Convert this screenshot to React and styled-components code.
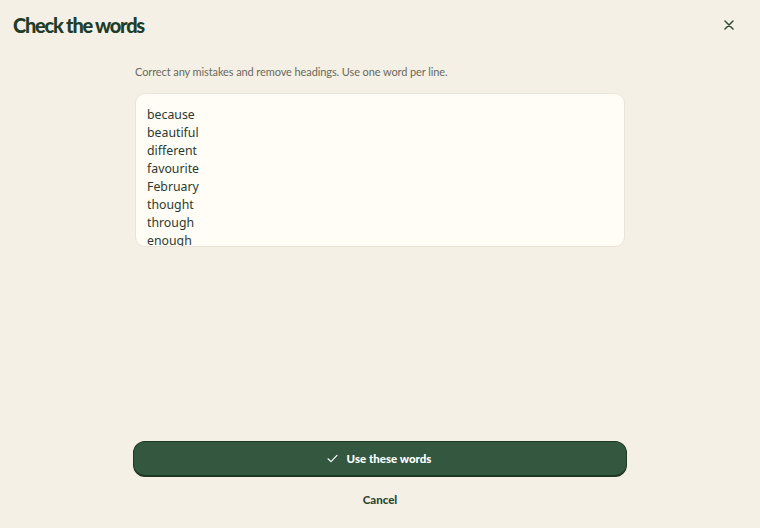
import React from "react";
import styled, { createGlobalStyle } from "styled-components";

const Global = createGlobalStyle`
  html, body { margin: 0; padding: 0; background: #f4f0e5; }
  body { font-family: Lato, "Noto Sans", sans-serif; }
  * { box-sizing: border-box; }
`;

const Page = styled.div`
  width: 760px;
  height: 528px;
  display: flex;
  flex-direction: column;
  background: #f4f0e5;
`;

const Header = styled.header`
  display: flex;
  align-items: center;
  justify-content: space-between;
  height: 50px;
  padding: 0 24px 0 13px;
`;

const Title = styled.h1`
  margin: 0;
  font-family: Lato, "Noto Sans", sans-serif;
  font-weight: 900;
  font-size: 20px;
  letter-spacing: -1.25px;
  color: #223c2a;
`;

const CloseButton = styled.button`
  border: 0;
  background: none;
  padding: 0;
  width: 14px;
  height: 14px;
  display: flex;
  align-items: center;
  justify-content: center;
  color: #2f4a37;
  cursor: pointer;
`;

const Body = styled.main`
  flex: 1;
  width: 494px;
  margin: 0 auto;
  display: flex;
  flex-direction: column;
`;

const Hint = styled.p`
  margin: 15px 2px 0;
  font-family: Lato, "Noto Sans", sans-serif;
  font-size: 11px;
  letter-spacing: -0.1px;
  color: #6a6a5e;
  line-height: 14px;
`;

const WordsArea = styled.textarea`
  margin: 14px 2px 0;
  height: 154px;
  resize: none;
  border: 1px solid #e9e4d6;
  border-radius: 10px;
  background: #fffdf6;
  padding: 12px 11px 0;
  font-family: "Noto Sans", sans-serif;
  font-size: 12.3px;
  line-height: 18px;
  color: #2c3a30;
  outline: none;
  overflow: hidden;
`;

const Footer = styled.footer`
  width: 494px;
  margin: 0 auto;
  padding-bottom: 21px;
  display: flex;
  flex-direction: column;
  align-items: center;
  gap: 14px;
`;

const PrimaryButton = styled.button`
  width: 100%;
  height: 36px;
  border: 1px solid #1f3826;
  border-bottom-width: 2px;
  border-radius: 12px;
  background: #33573f;
  color: #ffffff;
  font-family: Lato, "Noto Sans", sans-serif;
  font-weight: 900;
  font-size: 11.5px;
  display: flex;
  align-items: center;
  justify-content: center;
  gap: 9px;
  padding-left: 4px;
  cursor: pointer;
`;

const TextButton = styled.button`
  border: 0;
  background: none;
  font-family: Lato, "Noto Sans", sans-serif;
  font-weight: 900;
  font-size: 11.5px;
  color: #2c4a33;
  padding: 0;
  height: 16px;
  cursor: pointer;
`;

const words = [
  "because",
  "beautiful",
  "different",
  "favourite",
  "February",
  "thought",
  "through",
  "enough",
];

export default function App() {
  return (
    <Page>
      <Global />
      <Header>
        <Title>Check the words</Title>
        <CloseButton aria-label="Close">
          <svg width="10" height="10" viewBox="0 0 10 10" fill="none">
            <path d="M1 1L9 9M9 1L1 9" stroke="currentColor" strokeWidth="1.5" strokeLinecap="round" />
          </svg>
        </CloseButton>
      </Header>
      <Body>
        <Hint>Correct any mistakes and remove headings. Use one word per line.</Hint>
        <WordsArea defaultValue={words.join("\n")} spellCheck={false} />
      </Body>
      <Footer>
        <PrimaryButton>
          <svg width="11" height="9" viewBox="0 0 11 9" fill="none">
            <path d="M1 4.8L4 7.6L10 1.4" stroke="currentColor" strokeWidth="1.2" strokeLinecap="round" strokeLinejoin="round" />
          </svg>
          Use these words
        </PrimaryButton>
        <TextButton>Cancel</TextButton>
      </Footer>
    </Page>
  );
}
